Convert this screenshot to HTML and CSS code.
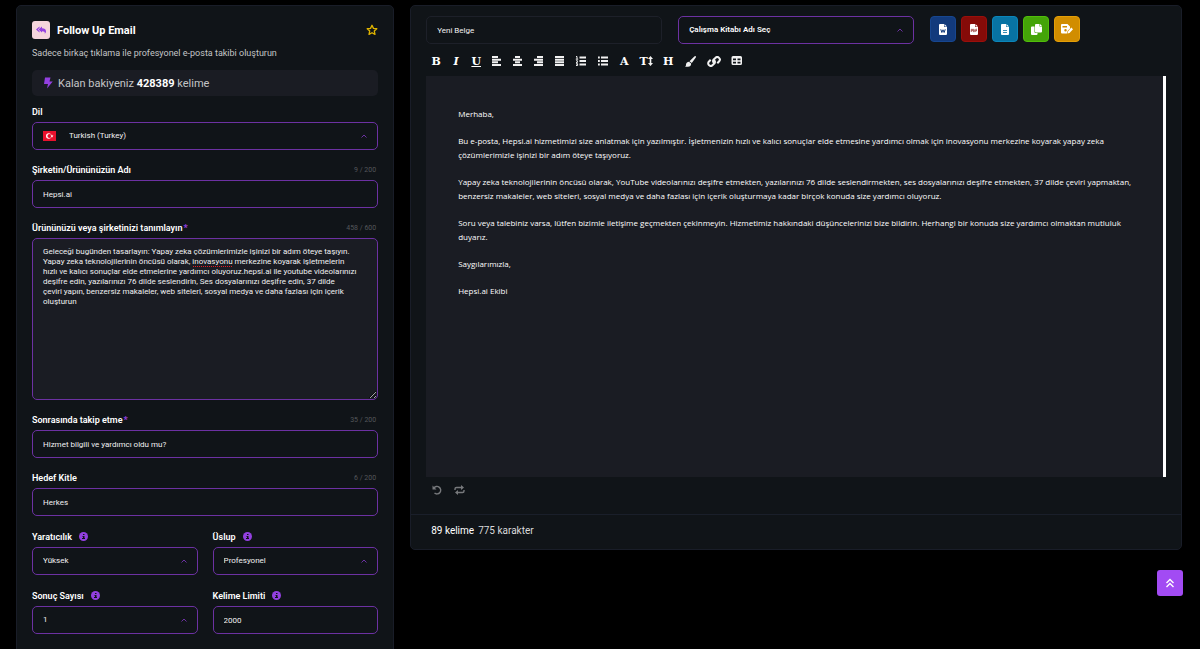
FILE: index.html
```html
<!DOCTYPE html>
<html lang="tr">
<head>
    <meta charset="UTF-8">
    <meta name="viewport" content="width=device-width, initial-scale=1">
    <title>Follow Up Email</title>
    <link rel="stylesheet" href="styles.css">
</head>
<body>
    <main class="page">
        <form class="panel form-panel">
            <div class="tool-head">
                <span class="tool-icon">
                    <svg width="10" height="8" viewBox="0 0 20 16"><path d="M7 1v3L3.500 7 7 10v3L0 7zM12 1v3.500c5 0 8 2.500 8 6 0 2-1 4-2.500 5 .8-3.500-1-5-5.500-5V13L5 7z" fill="#9340e0"/></svg>
                </span>
                <h1>Follow Up Email</h1>
                <button type="button" class="star" aria-label="Favori">
                    <svg width="12" height="12" viewBox="0 0 24 24"><path d="M12 2.500l2.900 6.200 6.700.8-5 4.600 1.400 6.700-6-3.400-6 3.400 1.400-6.700-5-4.600 6.700-.8z" fill="none" stroke="#e0b400" stroke-width="2.600" stroke-linejoin="round"/></svg>
                </button>
            </div>
            <p class="subtitle">Sadece birkaç tıklama ile profesyonel e-posta takibi oluşturun</p>
            <div class="balance">
                <svg width="10" height="12" viewBox="0 0 20 24"><path d="M4 1h11l-2 8h6.500L8 23l2-9H2z" fill="#9340e0"/></svg>
                <span>Kalan bakiyeniz <strong>428389</strong> kelime</span>
            </div>

            <div class="field">
                <div class="label-row"><label for="lang">Dil</label></div>
                <div class="select-wrap">
                    <svg class="flag" width="13" height="10" viewBox="0 0 26 20"><path fill="#e8112d" d="M0 0h26v20H0z"/><circle cx="11.500" cy="10" r="5.500" fill="#fff"/><circle cx="13" cy="10" r="4.200" fill="#e8112d"/><path fill="#fff" d="M18 7l.8 2.200 2.300.1-1.800 1.400.6 2.200-1.900-1.300-1.900 1.300.6-2.200-1.800-1.400 2.300-.1z"/></svg>
                    <select id="lang" class="control with-flag"><option>Turkish (Turkey)</option></select>
                    <svg class="caret" width="6" height="4" viewBox="0 0 12 8"><path d="M1 7l5-5 5 5"/></svg>
                </div>
            </div>

            <div class="field">
                <div class="label-row"><label for="company">Şirketin/Ürününüzün Adı</label><span class="count">9 / 200</span></div>
                <input id="company" class="control" type="text" value="Hepsi.ai">
            </div>

            <div class="field">
                <div class="label-row"><label for="desc">Ürününüzü veya şirketinizi tanımlayın<b class="req">*</b></label><span class="count">458 / 600</span></div>
                <div class="textarea-wrap">
                    <textarea id="desc" class="control" spellcheck="false">Geleceği bugünden tasarlayın: Yapay zeka çözümlerimizle işinizi bir adım öteye taşıyın.
Yapay zeka teknolojilerinin öncüsü olarak, inovasyonu merkezine koyarak işletmelerin
hızlı ve kalıcı sonuçlar elde etmelerine yardımcı oluyoruz.hepsi.ai ile youtube videolarınızı
deşifre edin, yazılarınızı 76 dilde seslendirin, Ses dosyalarınızı deşifre edin, 37 dilde
çeviri yapın, benzersiz makaleler, web siteleri, sosyal medya ve daha fazlası için içerik
oluşturun</textarea>
                    <span class="squiggle"></span>
                </div>
            </div>

            <div class="field">
                <div class="label-row"><label for="follow">Sonrasında takip etme<b class="req">*</b></label><span class="count">35 / 200</span></div>
                <input id="follow" class="control" type="text" value="Hizmet bilgili ve yardımcı oldu mu?">
            </div>

            <div class="field">
                <div class="label-row"><label for="audience">Hedef Kitle</label><span class="count">6 / 200</span></div>
                <input id="audience" class="control" type="text" value="Herkes">
            </div>

            <div class="field-grid">
                <div>
                    <div class="label-row"><label for="creativity">Yaratıcılık</label><svg class="info" width="9" height="9" viewBox="0 0 18 18"><circle cx="9" cy="9" r="9"/><path d="M8 4h3v2H8zM7 8h4v4h1v2H6v-2h2v-2H7z"/></svg></div>
                    <div class="select-wrap">
                        <select id="creativity" class="control"><option>Yüksek</option></select>
                        <svg class="caret" width="6" height="4" viewBox="0 0 12 8"><path d="M1 7l5-5 5 5"/></svg>
                    </div>
                </div>
                <div>
                    <div class="label-row"><label for="tone">Üslup</label><svg class="info" width="9" height="9" viewBox="0 0 18 18"><circle cx="9" cy="9" r="9"/><path d="M8 4h3v2H8zM7 8h4v4h1v2H6v-2h2v-2H7z"/></svg></div>
                    <div class="select-wrap">
                        <select id="tone" class="control"><option>Profesyonel</option></select>
                        <svg class="caret" width="6" height="4" viewBox="0 0 12 8"><path d="M1 7l5-5 5 5"/></svg>
                    </div>
                </div>
                <div>
                    <div class="label-row"><label for="results">Sonuç Sayısı</label><svg class="info" width="9" height="9" viewBox="0 0 18 18"><circle cx="9" cy="9" r="9"/><path d="M8 4h3v2H8zM7 8h4v4h1v2H6v-2h2v-2H7z"/></svg></div>
                    <div class="select-wrap">
                        <select id="results" class="control"><option>1</option></select>
                        <svg class="caret" width="6" height="4" viewBox="0 0 12 8"><path d="M1 7l5-5 5 5"/></svg>
                    </div>
                </div>
                <div>
                    <div class="label-row"><label for="limit">Kelime Limiti</label><svg class="info" width="9" height="9" viewBox="0 0 18 18"><circle cx="9" cy="9" r="9"/><path d="M8 4h3v2H8zM7 8h4v4h1v2H6v-2h2v-2H7z"/></svg></div>
                    <input id="limit" class="control" type="text" value="2000">
                </div>
            </div>
        </form>

        <section class="panel editor-panel">
            <div class="editor-main">
                <div class="doc-bar">
                    <input class="control plain" type="text" value="Yeni Belge" aria-label="Belge adı">
                    <div class="select-wrap">
                        <select class="control strong" aria-label="Çalışma kitabı"><option>Çalışma Kitabı Adı Seç</option></select>
                        <svg class="caret" width="6" height="4" viewBox="0 0 12 8"><path d="M1 7l5-5 5 5"/></svg>
                    </div>
                    <div class="actions">
                        <button type="button" class="action word" aria-label="Word">
                            <svg width="8" height="11" viewBox="0 0 16 22"><path fill="#fff" d="M2 0h8v6h6v14a2 2 0 0 1-2 2H2a2 2 0 0 1-2-2V2a2 2 0 0 1 2-2zm9 0l5 5h-5z"/><path d="M3.500 10.500L5.700 17 8 11.500 10.300 17l2.200-6.500" fill="none" stroke="#123a7c" stroke-width="2"/></svg>
                        </button>
                        <button type="button" class="action pdf" aria-label="PDF">
                            <svg width="8" height="11" viewBox="0 0 16 22"><path fill="#fff" d="M2 0h8v6h6v14a2 2 0 0 1-2 2H2a2 2 0 0 1-2-2V2a2 2 0 0 1 2-2zm9 0l5 5h-5z"/><path d="M2.500 16v-5.500H5v3H2.500M7 11v4.500h1.500l.8-1v-2.500L8 10.500H7M11.500 16v-5.500H14M11.500 13H14" fill="none" stroke="#850b08" stroke-width="1.200"/></svg>
                        </button>
                        <button type="button" class="action text" aria-label="Metin">
                            <svg width="8" height="11" viewBox="0 0 16 22"><path fill="#fff" d="M2 0h8v6h6v14a2 2 0 0 1-2 2H2a2 2 0 0 1-2-2V2a2 2 0 0 1 2-2zm9 0l5 5h-5z"/><path d="M4 13h8M4 17h8" stroke="#0873a3" stroke-width="1.600"/></svg>
                        </button>
                        <button type="button" class="action copy" aria-label="Kopyala">
                            <svg width="11" height="11" viewBox="0 0 22 22"><path fill="#fff" d="M10 0h7v5h5v10a2 2 0 0 1-2 2H10a2 2 0 0 1-2-2V2a2 2 0 0 1 2-2zm8 0l4 4h-4zM2 5h5v11a2 2 0 0 0 2 2h4v2a2 2 0 0 1-2 2H2a2 2 0 0 1-2-2V7a2 2 0 0 1 2-2z"/></svg>
                        </button>
                        <button type="button" class="action save" aria-label="Kaydet">
                            <svg width="12" height="10" viewBox="0 0 24 20"><path fill="#fff" fill-rule="evenodd" d="M2 0h11l5 5v4l-5 5-1 5H2a2 2 0 0 1-2-2V2a2 2 0 0 1 2-2zm1 4v3h9V4zm6 6a2.500 2.500 0 1 0 0 5 2.500 2.500 0 0 0 0-5z"/><path fill="#fff" d="M20.500 7L24 10.500 17 18l-4 1 1-4z"/></svg>
                        </button>
                    </div>
                </div>

                <div class="toolbar">
                    <button type="button" class="letter">B</button>
                    <button type="button" class="letter italic">I</button>
                    <button type="button" class="letter underline">U</button>
                    <button type="button" aria-label="Sola hizala"><svg width="11" height="10" viewBox="0 0 11 10"><path d="M1 1h6M1 3.700h9M1 6.300h6M1 9h9"/></svg></button>
                    <button type="button" aria-label="Ortala"><svg width="11" height="10" viewBox="0 0 11 10"><path d="M3 1h5M1 3.700h9M3 6.300h5M1 9h9"/></svg></button>
                    <button type="button" aria-label="Sağa hizala"><svg width="11" height="10" viewBox="0 0 11 10"><path d="M4 1h6M1 3.700h9M4 6.300h6M1 9h9"/></svg></button>
                    <button type="button" aria-label="İki yana yasla"><svg width="11" height="10" viewBox="0 0 11 10"><path d="M1 1h9M1 3.700h9M1 6.300h9M1 9h9"/></svg></button>
                    <button type="button" aria-label="Numaralı liste"><svg width="12" height="10" viewBox="0 0 12 10"><path d="M4.500 1.500H11M4.500 5H11M4.500 8.500H11"/><path class="thin" d="M1 .5h1V3M.8 3.200h2.400M1 4.800h1.500v1L1 7h2M1 8h1.600v1.500H1"/></svg></button>
                    <button type="button" aria-label="Liste"><svg width="12" height="10" viewBox="0 0 12 10"><path d="M4 1.500h7M4 5h7M4 8.500h7M1 1.500h1.800M1 5h1.800M1 8.500h1.800"/></svg></button>
                    <button type="button" class="letter">A</button>
                    <button type="button" class="letter size">T<svg width="5" height="10" viewBox="0 0 5 10"><path class="fill" d="M2.500 0L5 3H3.300v4H5L2.500 10 0 7h1.700V3H0z"/></svg></button>
                    <button type="button" class="letter">H</button>
                    <button type="button" aria-label="Fırça"><svg width="14" height="11" viewBox="0 0 14 11"><path class="fill" d="M12.200 0c.9 0 1 .9.600 1.500L8.800 7 6.500 5.200l4.800-4.700c.3-.3.600-.5.900-.5zM6 5.800l2.200 1.700C8.200 9.500 7 10.800 5 10.800H2c1-.6.9-1.200 1-2.300C3.200 6.800 4.500 5.800 6 5.800z"/></svg></button>
                    <button type="button" aria-label="Bağlantı"><svg width="14" height="11" viewBox="0 0 14 11"><path class="line" d="M7.800 7.300A2.300 2.300 0 0 1 6.500 3.700L8.300 2a2.500 2.500 0 0 1 3.900 3.300L10.300 7.300M6.200 3.700a2.300 2.300 0 0 1 1.300 3.600L5.700 9a2.500 2.500 0 0 1-3.900-3.300l1.900-2"/></svg></button>
                    <button type="button" aria-label="Tablo"><svg width="12" height="10" viewBox="0 0 12 10"><path class="fill" fill-rule="evenodd" d="M2 0h7.500A1.500 1.500 0 0 1 11 1.500v6A1.500 1.500 0 0 1 9.500 9H2A1.500 1.500 0 0 1 .5 7.500v-6A1.500 1.500 0 0 1 2 0zm0 2.500v1.700h3V2.500zm4.500 0v1.700h3V2.500zM2 5.700v1.800h3V5.700zm4.500 0v1.800h3V5.700z"/></svg></button>
                </div>

                <div class="editor" contenteditable="true" spellcheck="false">
                    <p>Merhaba,</p>
                    <p>Bu e-posta, Hepsi.ai hizmetimizi size anlatmak için yazılmıştır. İşletmenizin hızlı ve kalıcı sonuçlar elde etmesine yardımcı olmak için inovasyonu merkezine koyarak yapay zeka çözümlerimizle işinizi bir adım öteye taşıyoruz.</p>
                    <p>Yapay zeka teknolojilerinin öncüsü olarak, YouTube videolarınızı deşifre etmekten, yazılarınızı 76 dilde seslendirmekten, ses dosyalarınızı deşifre etmekten, 37 dilde çeviri yapmaktan, benzersiz makaleler, web siteleri, sosyal medya ve daha fazlası için içerik oluşturmaya kadar birçok konuda size yardımcı oluyoruz.</p>
                    <p>Soru veya talebiniz varsa, lütfen bizimle iletişime geçmekten çekinmeyin. Hizmetimiz hakkındaki düşüncelerinizi bize bildirin. Herhangi bir konuda size yardımcı olmaktan mutluluk duyarız.</p>
                    <p>Saygılarımızla,</p>
                    <p>Hepsi.ai Ekibi</p>
                </div>

                <div class="history">
                    <button type="button" aria-label="Geri al"><svg width="10" height="10" viewBox="0 0 20 20"><path d="M3.500 6.500A7.500 7.500 0 1 1 5 16" fill="none" stroke="#77797c" stroke-width="2.800"/><path d="M1 1v8h8z" fill="#77797c"/></svg></button>
                    <button type="button" aria-label="Yinele"><svg width="11" height="10" viewBox="0 0 22 20"><path d="M2 10V8a3 3 0 0 1 3-3h10M20 10v2a3 3 0 0 1-3 3H7" fill="none" stroke="#77797c" stroke-width="2.800"/><path d="M14 0l6 5-6 5zM8 10l-6 5 6 5z" fill="#77797c"/></svg></button>
                </div>
            </div>
            <div class="editor-foot"><span>89 kelime</span><span class="chars">775 karakter</span></div>
        </section>
    </main>

    <a href="#" class="to-top" aria-label="Yukarı çık">
        <svg width="10" height="10" viewBox="0 0 20 20"><path d="M3 10l7-7 7 7M3 18l7-7 7 7" fill="none" stroke="#fff" stroke-width="2.800"/></svg>
    </a>
</body>
</html>
```

FILE: styles.css
```css
* {
    box-sizing: border-box;
}

body {
    margin: 0;
    height: 100vh;
    overflow: hidden;
    background-color: #000;
    color: #fff;
    font-family: Roboto, "Liberation Sans", sans-serif;
    font-size: 9px;
}

button, input, select, textarea {
    font: inherit;
    color: inherit;
}

button {
    border: 0;
    padding: 0;
    background: none;
    cursor: pointer;
}

svg {
    display: block;
    flex: none;
}

.page {
    display: grid;
    grid-template-columns: minmax(0, 49fr) minmax(0, 100fr);
    gap: 16px;
    align-items: start;
    padding: 5px 18px 0 16px;
}

.panel {
    background-color: #101418;
    border: 1px solid #191d28;
    border-radius: 5px;
}

/* Form */
.form-panel {
    padding: 15px 15px 32px;
}

.tool-head {
    display: flex;
    align-items: center;
    gap: 7px;
    height: 18px;
}

.tool-icon {
    display: flex;
    align-items: center;
    justify-content: center;
    width: 18px;
    height: 18px;
    border-radius: 3px;
    background-color: #f5d5dc;
}

.tool-head h1 {
    margin: 0;
    font-size: 11px;
    font-weight: 700;
}

.star {
    margin-left: auto;
}

.subtitle {
    margin: 8px 0 11px;
    line-height: 12px;
    color: #c4c5c7;
}

.balance {
    display: flex;
    align-items: center;
    gap: 5px;
    height: 26px;
    margin-bottom: 8px;
    padding-left: 11px;
    border-radius: 5px;
    background-color: #1a1c23;
    color: #c4c5c7;
    font-size: 11px;
}

.balance strong {
    color: #fff;
}

.field {
    margin-bottom: 12px;
}

.label-row {
    display: flex;
    align-items: center;
    gap: 7px;
    height: 14px;
    margin-bottom: 4px;
    padding-top: 1px;
}

.label-row label {
    font-weight: 600;
}

.req {
    margin-left: 1px;
    color: #9340e0;
}

.count {
    margin-left: auto;
    padding-right: 2px;
    color: #54575b;
    font-size: 7px;
}

.info circle {
    fill: #9340e0;
}

.info path {
    fill: #101418;
}

.control {
    display: block;
    width: 100%;
    height: 28px;
    padding: 0 10px;
    border: 1px solid #6c31a2;
    border-radius: 5px;
    outline: 0;
    background-color: #101418;
    color: #f0f0f1;
    font-size: 8px;
    appearance: none;
}

select.control {
    padding-bottom: 2px;
}

textarea.control {
    height: 162px;
    padding: 8px 10px;
    background-color: #1a1c23;
    line-height: 10px;
    resize: vertical;
}

.select-wrap,
.textarea-wrap {
    position: relative;
}

select.with-flag {
    padding-left: 36px;
}

.flag {
    position: absolute;
    left: 11px;
    top: 9px;
}

.caret {
    position: absolute;
    right: 11px;
    top: 12px;
}

.caret path {
    fill: none;
    stroke: #6c31a2;
    stroke-width: 2;
}

.squiggle {
    position: absolute;
    left: 161px;
    top: 28px;
    width: 39px;
    border-bottom: 1px dotted #e01b24;
}

.field-grid {
    display: grid;
    grid-template-columns: 1fr 1fr;
    gap: 13px 15px;
    padding-top: 1px;
}

/* Editor */
.editor-main {
    padding: 10px 15px 0;
}

.doc-bar {
    display: grid;
    grid-template-columns: repeat(3, 1fr);
    gap: 16px;
}

.plain {
    border-color: #1d2029;
}

.strong {
    font-weight: 600;
    color: #fff;
}

.actions {
    display: flex;
    gap: 5px;
}

.action {
    display: flex;
    align-items: center;
    justify-content: center;
    width: 26px;
    height: 26px;
    border: 1px solid;
    border-radius: 4px;
}

.word {
    background-color: #123a7c;
    border-color: #17468f;
}

.pdf {
    background-color: #850b08;
    border-color: #990f0b;
}

.text {
    background-color: #0873a3;
    border-color: #0b85b9;
}

.copy {
    background-color: #44a408;
    border-color: #50bd0a;
}

.save {
    background-color: #d18d00;
    border-color: #e49e07;
}

.toolbar {
    display: flex;
    align-items: center;
    height: 32px;
    padding-top: 2px;
}

.toolbar button {
    display: flex;
    align-items: center;
    justify-content: center;
    padding: 0 5px;
    height: 14px;
}

.toolbar path {
    stroke: #f1f1f1;
    stroke-width: 2;
}

.toolbar .thin {
    fill: none;
    stroke-width: 1;
}

.toolbar .line {
    fill: none;
    stroke-width: 2;
}

.toolbar .fill {
    fill: #f1f1f1;
    stroke: none;
}

.toolbar .letter {
    width: 20px;
    font-family: "DejaVu Serif", serif;
    font-size: 11px;
    font-weight: 700;
    line-height: 11px;
}

.toolbar .italic {
    font-style: italic;
}

.toolbar .underline {
    text-decoration: underline;
}

.toolbar .size {
    width: 24px;
}

.editor {
    min-height: 401px;
    padding: 31px 24px 31px 32px;
    border-right: 3px solid #fff;
    outline: 0;
    background-color: #1a1c23;
    color: #fff;
    font-family: "Open Sans", sans-serif;
    font-size: 8px;
    line-height: 14px;
}

.editor p {
    margin: 0 0 13px;
}

.history {
    display: flex;
    align-items: center;
    gap: 12px;
    height: 37px;
    padding: 0 6px 12px;
}

.editor-foot {
    display: flex;
    align-items: center;
    gap: 4px;
    height: 35px;
    padding: 0 20px 3px;
    border-top: 1px solid #1a1f2a;
    font-size: 10px;
}

.chars {
    color: #d9dadb;
}

.to-top {
    position: fixed;
    right: 17px;
    bottom: 53px;
    display: flex;
    align-items: center;
    justify-content: center;
    width: 26px;
    height: 26px;
    border-radius: 3px;
    background-color: #a24bf3;
}
```
